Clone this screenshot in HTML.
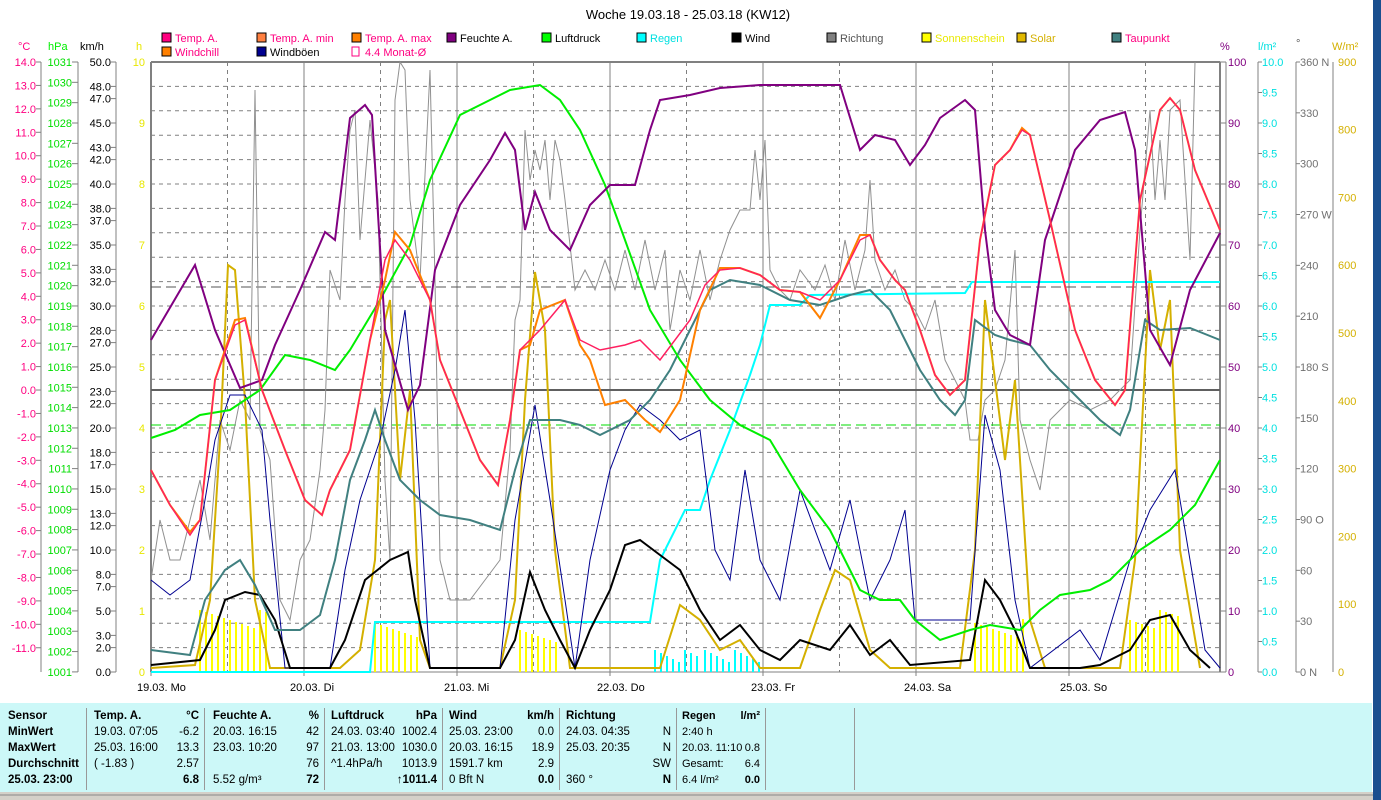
<!DOCTYPE html>
<html><head><meta charset="utf-8"><style>
html,body{margin:0;padding:0;background:#fff;width:1381px;height:800px;overflow:hidden;font-family:"Liberation Sans",sans-serif}
svg{position:absolute;left:0;top:0}
.tb{position:absolute;left:0;top:703px;width:1372px;height:89px;background:#ccf8f8;font-size:11.5px;font-family:"Liberation Sans Narrow","Liberation Sans",sans-serif}
.col{position:absolute;top:5px;height:82px;border-right:1px solid #999}
.r{height:16px;line-height:16px;white-space:nowrap;position:relative}
.r span{position:absolute;right:5px}
b{font-weight:bold}
</style></head><body>
<svg width="1381" height="800" viewBox="0 0 1381 800" font-family="Liberation Sans, sans-serif" font-size="11">
<rect x="1373" y="0" width="8" height="800" fill="#1a4f8f"/>
<text x="688" y="19" text-anchor="middle" font-size="13">Woche 19.03.18 - 25.03.18 (KW12)</text>
<g font-size="11">
<rect x="162" y="33" width="9" height="9" fill="#ff0080" stroke="#000"/><text x="175" y="42" fill="#ff0080">Temp. A.</text>
<rect x="257" y="33" width="9" height="9" fill="#ff8040" stroke="#000"/><text x="270" y="42" fill="#ff0080">Temp. A. min</text>
<rect x="352" y="33" width="9" height="9" fill="#ff8000" stroke="#000"/><text x="365" y="42" fill="#ff0080">Temp. A. max</text>
<rect x="447" y="33" width="9" height="9" fill="#800080" stroke="#000"/><text x="460" y="42">Feuchte A.</text>
<rect x="542" y="33" width="9" height="9" fill="#00ff00" stroke="#000"/><text x="555" y="42">Luftdruck</text>
<rect x="637" y="33" width="9" height="9" fill="#00ffff" stroke="#000"/><text x="650" y="42" fill="#00e0e0">Regen</text>
<rect x="732" y="33" width="9" height="9" fill="#000" stroke="#000"/><text x="745" y="42">Wind</text>
<rect x="827" y="33" width="9" height="9" fill="#808080" stroke="#000"/><text x="840" y="42" fill="#555">Richtung</text>
<rect x="922" y="33" width="9" height="9" fill="#ffff00" stroke="#000"/><text x="935" y="42" fill="#e8e800">Sonnenschein</text>
<rect x="1017" y="33" width="9" height="9" fill="#e0b800" stroke="#000"/><text x="1030" y="42" fill="#d4b000">Solar</text>
<rect x="1112" y="33" width="9" height="9" fill="#408080" stroke="#000"/><text x="1125" y="42" fill="#ff0080">Taupunkt</text>
<rect x="162" y="47" width="9" height="9" fill="#ff8000" stroke="#000"/><text x="175" y="56" fill="#ff0080">Windchill</text>
<rect x="257" y="47" width="9" height="9" fill="#000090" stroke="#000"/><text x="270" y="56">Windböen</text>
<rect x="352" y="47" width="7" height="9" fill="none" stroke="#ff0080"/><text x="365" y="56" fill="#ff0080">4.4 Monat-Ø</text>
</g>
<text x="18" y="50" fill="#ff0080">°C</text><text x="48" y="50" fill="#00ee00">hPa</text><text x="80" y="50">km/h</text><text x="136" y="50" fill="#e8e800">h</text>
<text x="1220" y="50" fill="#800080">%</text><text x="1258" y="50" fill="#00e0e0">l/m²</text><text x="1296" y="47" fill="#555">°</text><text x="1332" y="50" fill="#d4b000">W/m²</text>
<g stroke="#808080"><line x1="41" y1="62" x2="41" y2="672"/><line x1="78" y1="62" x2="78" y2="672"/><line x1="116" y1="62" x2="116" y2="672"/>
<line x1="1226" y1="62" x2="1226" y2="672"/><line x1="1258" y1="62" x2="1258" y2="672"/><line x1="1296" y1="62" x2="1296" y2="672"/><line x1="1333" y1="62" x2="1333" y2="672"/></g>
<g id="ax" font-size="11"></g>
<g id="grid"></g>
<line x1="151" y1="62" x2="1220" y2="62" stroke="#808080" stroke-width="2"/>
<line x1="151" y1="62" x2="151" y2="672" stroke="#808080" stroke-width="2"/>
<line x1="1220" y1="62" x2="1220" y2="672" stroke="#808080" stroke-width="2"/>
<line x1="151" y1="672" x2="1220" y2="672" stroke="#808080" stroke-width="1"/>
<line x1="151" y1="390" x2="1220" y2="390" stroke="#606060" stroke-width="2"/>
<line x1="151" y1="287" x2="1220" y2="287" stroke="#555" stroke-dasharray="10,5"/>
<line x1="151" y1="425" x2="1220" y2="425" stroke="#00dd00" stroke-dasharray="10,5"/>
<g id="bars" stroke="#ffff00" stroke-width="2"></g>
<polyline fill="none" stroke="#909090" stroke-width="1" points="151,580 160,520 170,560 180,560 190,520 200,480 210,540 220,420 230,450 240,400 250,420 255,90 260,430 270,460 280,600 290,620 300,560 310,540 320,470 325,410 330,270 340,300 345,200 350,130 355,110 360,240 370,120 378,200 385,480 390,560 395,100 400,62 405,70 410,200 420,280 430,70 435,280 440,560 450,600 470,600 500,560 510,450 515,320 520,300 525,130 530,180 535,150 540,170 545,140 550,200 555,140 560,160 565,200 575,290 585,270 595,290 605,260 615,290 625,250 635,290 645,240 655,290 665,250 670,330 680,270 690,300 700,250 710,300 720,260 730,230 740,210 750,210 755,150 760,200 765,140 770,270 780,290 790,300 800,270 815,290 825,265 835,300 845,240 855,290 865,250 870,180 875,260 885,290 895,270 905,300 915,310 925,330 935,300 945,360 955,380 965,400 970,440 978,440 985,400 995,390 1005,360 1015,250 1020,420 1030,460 1040,490 1050,420 1070,400 1090,410 1110,400 1130,380 1140,230 1145,170 1150,110 1155,200 1160,140 1165,200 1170,110 1180,100 1190,260 1195,62"/>
<polyline fill="none" stroke="#d4b000" stroke-width="2" points="151,668 195,665 210,600 220,440 228,265 235,270 245,400 255,600 270,668 340,668 360,650 375,560 385,320 390,300 400,480 410,390 420,640 430,668 500,668 515,600 525,400 535,272 545,330 555,550 570,668 660,668 680,605 700,620 720,650 740,640 760,668 800,668 820,610 835,570 850,580 870,650 890,668 960,668 975,550 985,300 995,380 1005,460 1015,380 1030,620 1045,668 1120,668 1135,560 1150,270 1160,350 1170,300 1180,550 1200,668"/>
<polyline fill="none" stroke="#00ffff" stroke-width="2" points="151,672 370,672 375,622 650,622 660,560 685,510 700,510 710,480 730,430 750,375 760,345 770,305 800,305 810,295 965,293 972,282 1220,282"/>
<polyline fill="none" stroke="#000090" stroke-width="1" points="151,580 170,595 190,580 205,500 215,440 230,395 245,395 262,430 270,520 285,668 330,668 345,570 360,500 380,440 395,370 405,310 415,420 430,668 500,668 515,520 535,405 550,500 565,600 575,668 590,560 610,470 625,430 640,405 660,420 680,440 700,430 715,550 730,580 745,470 760,560 780,600 800,490 830,570 850,500 870,600 890,560 905,510 915,620 970,620 985,415 1000,470 1015,600 1030,668 1080,630 1100,660 1130,560 1150,510 1175,470 1190,560 1205,650 1220,668"/>
<polyline fill="none" stroke="#000" stroke-width="2" points="151,665 200,660 215,630 225,600 245,592 260,595 275,620 290,668 330,668 345,640 365,580 390,560 408,552 415,600 430,668 500,668 515,640 530,572 545,610 560,640 575,668 590,630 610,590 625,545 640,540 660,555 680,570 700,610 720,640 740,625 760,650 780,660 800,640 830,650 850,625 870,655 890,640 910,665 970,660 985,580 1000,600 1015,630 1030,668 1080,668 1100,665 1130,650 1150,620 1170,615 1190,650 1210,668"/>
<polyline fill="none" stroke="#408080" stroke-width="2" points="151,650 190,655 205,600 225,570 240,560 255,585 275,630 300,630 320,615 335,560 350,480 365,440 375,410 385,440 400,480 420,500 440,515 470,520 500,530 515,470 530,420 560,420 580,425 600,435 630,420 650,400 670,370 690,330 710,290 730,280 760,285 790,300 820,305 850,295 870,290 890,310 905,340 920,370 940,400 955,415 965,400 975,320 995,335 1010,340 1030,345 1050,370 1080,400 1100,420 1120,435 1130,410 1145,320 1160,330 1190,328 1220,340"/>
<polyline fill="none" stroke="#00ee00" stroke-width="2" points="151,438 175,430 200,415 230,410 260,390 285,355 310,360 335,370 350,350 380,300 410,245 430,180 460,115 490,100 510,90 540,85 560,100 580,130 605,185 625,240 650,310 680,360 710,400 740,425 770,440 800,490 830,530 860,590 880,600 900,600 915,620 940,640 970,630 990,625 1020,630 1040,610 1060,595 1090,590 1110,580 1140,550 1170,530 1195,505 1220,460"/>
<polyline fill="none" stroke="#800080" stroke-width="2" points="151,340 195,265 215,330 240,388 262,380 275,345 300,290 325,232 335,240 350,118 365,105 372,115 385,330 408,410 420,385 435,270 460,205 490,160 505,133 515,150 525,230 535,192 550,230 570,250 590,205 610,185 635,185 650,130 660,100 690,95 720,88 760,85 840,85 860,150 875,135 895,140 910,165 925,145 940,118 965,100 975,110 985,230 995,310 1010,335 1030,345 1045,240 1075,150 1100,120 1125,112 1135,150 1150,330 1170,365 1190,290 1220,233"/>
<polyline fill="none" stroke="#ff8000" stroke-width="2" points="151,470 170,505 190,532 200,520 215,380 235,320 245,318 262,390 285,450 305,500 322,515 330,490 350,450 370,340 385,280 395,232 410,250 430,300 440,360 460,410 480,460 498,485 510,420 520,350 530,345 540,310 565,300 580,345 590,360 605,405 625,400 645,420 660,432 680,400 700,310 720,268 740,268 760,275 780,290 800,292 820,318 840,280 860,235 870,235 880,260 895,280 905,290 920,330 935,375 950,395 965,380 980,240 995,165 1010,150 1022,128 1030,135 1050,220 1075,330 1095,380 1115,405 1125,390 1140,200 1160,110 1170,98 1180,110 1195,170 1220,230"/>
<polyline fill="none" stroke="#ff2060" stroke-width="1.5" points="151,470 170,505 190,535 200,520 215,380 235,325 245,320 262,390 285,450 305,500 322,515 330,490 350,450 370,340 385,260 395,240 410,260 430,300 440,360 460,410 480,460 498,485 510,420 520,350 540,330 565,300 580,340 600,350 625,345 640,340 660,360 690,320 705,285 720,270 740,268 760,275 780,290 800,292 820,300 840,280 860,240 870,235 880,260 895,280 905,290 920,330 935,375 950,395 965,380 980,240 995,165 1010,150 1022,130 1030,135 1050,220 1075,330 1095,380 1115,405 1125,390 1140,200 1160,110 1170,98 1180,110 1195,170 1220,230"/>
<g font-size="11">
<text x="137" y="691">19.03.  Mo</text><text x="290" y="691">20.03.  Di</text><text x="444" y="691">21.03.  Mi</text><text x="597" y="691">22.03.  Do</text><text x="751" y="691">23.03.  Fr</text><text x="904" y="691">24.03.  Sa</text><text x="1060" y="691">25.03.  So</text>
</g>
<rect x="0" y="792" width="1373" height="8" fill="#d4d0c8"/>
<line x1="0" y1="795" x2="1373" y2="795" stroke="#888"/>
</svg>
<div class="tb">
<div class="col" style="left:0;width:87px;padding-left:8px;box-sizing:border-box"><div class="r"><b>Sensor</b></div><div class="r"><b>MinWert</b></div><div class="r"><b>MaxWert</b></div><div class="r"><b>Durchschnitt</b></div><div class="r"><b>25.03. 23:00</b></div></div>
<div class="col" style="left:88px;width:117px;padding-left:6px;box-sizing:border-box"><div class="r"><b>Temp. A.</b><span><b>°C</b></span></div><div class="r">19.03. 07:05<span>-6.2</span></div><div class="r">25.03. 16:00<span>13.3</span></div><div class="r">( -1.83 )<span>2.57</span></div><div class="r"><span><b>6.8</b></span></div></div>
<div class="col" style="left:206px;width:119px;padding-left:7px;box-sizing:border-box"><div class="r"><b>Feuchte A.</b><span><b>%</b></span></div><div class="r">20.03. 16:15<span>42</span></div><div class="r">23.03. 10:20<span>97</span></div><div class="r"><span>76</span></div><div class="r">5.52 g/m³<span><b>72</b></span></div></div>
<div class="col" style="left:326px;width:117px;padding-left:5px;box-sizing:border-box"><div class="r"><b>Luftdruck</b><span><b>hPa</b></span></div><div class="r">24.03. 03:40<span>1002.4</span></div><div class="r">21.03. 13:00<span>1030.0</span></div><div class="r">^1.4hPa/h<span>1013.9</span></div><div class="r"><span><b>↑1011.4</b></span></div></div>
<div class="col" style="left:444px;width:116px;padding-left:5px;box-sizing:border-box"><div class="r"><b>Wind</b><span><b>km/h</b></span></div><div class="r">25.03. 23:00<span>0.0</span></div><div class="r">20.03. 16:15<span>18.9</span></div><div class="r">1591.7 km<span>2.9</span></div><div class="r">0 Bft N<span><b>0.0</b></span></div></div>
<div class="col" style="left:561px;width:116px;padding-left:5px;box-sizing:border-box"><div class="r"><b>Richtung</b></div><div class="r">24.03. 04:35<span>N</span></div><div class="r">25.03. 20:35<span>N</span></div><div class="r"><span>SW</span></div><div class="r">360 °<span><b>N</b></span></div></div>
<div class="col" style="left:678px;width:88px;padding-left:4px;box-sizing:border-box;font-size:11px"><div class="r"><b>Regen</b><span><b>l/m²</b></span></div><div class="r">2:40 h</div><div class="r">20.03. 11:10<span>0.8</span></div><div class="r">Gesamt:<span>6.4</span></div><div class="r">6.4 l/m²<span><b>0.0</b></span></div></div>
<div class="col" style="left:767px;width:87px"></div>
</div>
<script>
(function(){
var ns="http://www.w3.org/2000/svg",ax=document.getElementById("ax"),g=document.getElementById("grid"),bars=document.getElementById("bars");
function t(x,y,s,c,a){var e=document.createElementNS(ns,"text");e.setAttribute("x",x);e.setAttribute("y",y+4);e.setAttribute("fill",c);if(a)e.setAttribute("text-anchor",a);e.textContent=s;ax.appendChild(e);}
function l(x1,y1,x2,y2,c,d,p){var e=document.createElementNS(ns,"line");e.setAttribute("x1",x1);e.setAttribute("y1",y1);e.setAttribute("x2",x2);e.setAttribute("y2",y2);e.setAttribute("stroke",c);if(d)e.setAttribute("stroke-dasharray",d);(p||g).appendChild(e);}
for(var i=14;i>=-11;i--){var y=62+(14-i)*23.43;t(36,y,i.toFixed(1),"#ff0080","end");l(36,y,41,y,"#808080",0,ax);}
for(var i=1031;i>=1001;i--){var y=62+(1031-i)*20.33;t(72,y,i,"#00dd00","end");l(72,y,78,y,"#808080",0,ax);}
[50,48,47,45,43,42,40,38,37,35,33,32,30,28,27,25,23,22,20,18,17,15,13,12,10,8,7,5,3,2,0].forEach(function(v){var y=672-v*12.2;t(111,y,v.toFixed(1),"#000","end");l(111,y,116,y,"#808080",0,ax);});
for(var i=10;i>=0;i--){var y=672-i*61;t(145,y,i,"#e8e800","end");}
for(var i=10;i>=0;i--){var y=672-i*61;t(1228,y,i*10,"#800080");l(1220,y,1226,y,"#808080",0,ax);}
for(var i=20;i>=0;i--){var y=672-i*30.5;t(1262,y,(i/2).toFixed(1),"#00e0e0");l(1258,y,1262,y,"#808080",0,ax);}
var dl={360:"N",270:"W",180:"S",90:"O",0:"N"};
for(var i=12;i>=0;i--){var v=i*30,y=672-v*610/360;t(1300,y,v+(dl[v]!==undefined?" "+dl[v]:""),"#707070");l(1296,y,1300,y,"#808080",0,ax);}
for(var i=9;i>=0;i--){var y=672-i*67.8;t(1338,y,i*100,"#d4b000");}
for(var k=1;k<25;k++){var y=62+k*24.4;l(151,y,1220,y,"#808080","4,4");}
for(var d=0;d<7;d++){var x=151+d*153;l(x,62,x,676,"#808080");l(x+76.5,62,x+76.5,672,"#808080","4,4");}
[[200,270,610],[375,420,618],[520,560,630],[975,1025,618],[1130,1180,610]].forEach(function(r){for(var x=r[0];x<=r[1];x+=6)l(x,672,x,r[2]+((x*7)%20),"#ffff00",0,bars);});
[[655,700],[705,760]].forEach(function(r){for(var x=r[0];x<=r[1];x+=6)l(x,672,x,650+((x*3)%15),"#00ffff",0,bars);});
})();
</script>
</body></html>
